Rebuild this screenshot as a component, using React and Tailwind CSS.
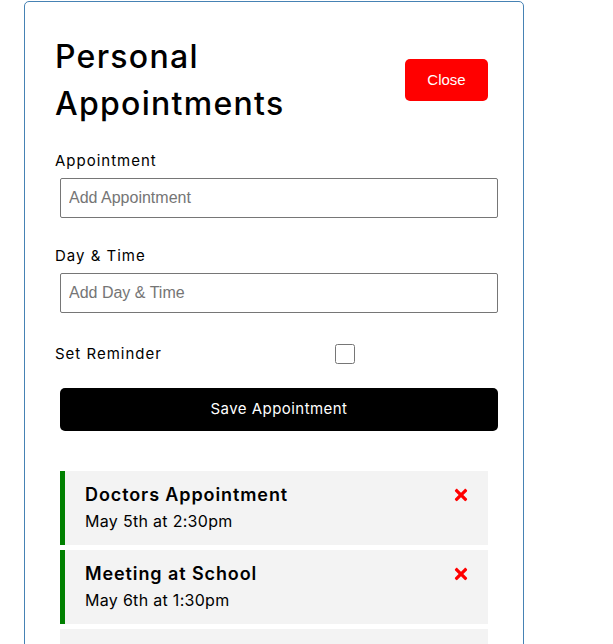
import React from "react";
import { FaTimes } from "react-icons/fa";

function Item({ title, date, reminder }) {
  return (
    <div
      className={
        reminder
          ? "ml-[5px] mr-[10px] mb-[5px] flex items-start justify-between bg-[#f3f3f3] border-l-[5px] border-[#008000] pl-[20px] pr-[18px] pt-[10px] pb-[11px]"
          : "ml-[5px] mr-[10px] mb-[5px] flex items-start justify-between bg-[#f3f3f3] border-l-[5px] border-transparent pl-[20px] pr-[18px] pt-[10px] pb-[11px]"
      }
    >
      <div>
        <div className="text-[18px] leading-[28px] font-semibold tracking-[0.9px] text-black">{title}</div>
        <div className="text-[16px] leading-[25px] tracking-[0.3px] text-black">{date}</div>
      </div>
      <div className="pt-[5px]">
        <FaTimes size={18} color="#ff0000" />
      </div>
    </div>
  );
}

export default function App() {
  return (
    <div className="min-h-[644px] bg-white pl-[24px] pt-[1px] font-[Inter,sans-serif]">
      <div className="w-[500px] min-h-[660px] border border-[#4682b4] rounded-[5px] pl-[30px] pr-[25px] pt-[31px]">
        <div className="flex items-center justify-between">
          <h1 className="text-[32px] leading-[47px] font-medium tracking-[0.04em] text-black w-[300px]">
            Personal Appointments
          </h1>
          <button className="mr-[10px] w-[83px] h-[42px] rounded-[5px] bg-[#ff0000] text-white text-[15px] font-['Liberation_Sans',Arial,sans-serif]">
            Close
          </button>
        </div>

        <label className="block mt-[23px] text-[15px] leading-[22px] tracking-[1px] text-black">Appointment</label>
        <input
          placeholder="Add Appointment"
          className="block mt-[6px] ml-[5px] w-[438px] h-[40px] border border-[#767676] rounded-[2px] px-[8px] text-[16px] font-['Liberation_Sans',Arial,sans-serif] placeholder:text-[#757575]"
        />

        <label className="block mt-[27px] text-[15px] leading-[22px] tracking-[1px] text-black">Day &amp; Time</label>
        <input
          placeholder="Add Day & Time"
          className="block mt-[6px] ml-[5px] w-[438px] h-[40px] border border-[#767676] rounded-[2px] px-[8px] text-[16px] font-['Liberation_Sans',Arial,sans-serif] placeholder:text-[#757575]"
        />

        <div className="mt-[30px] flex items-center">
          <span className="w-[280px] text-[15px] leading-[22px] tracking-[1px] text-black">Set Reminder</span>
          <input type="checkbox" className="w-[20px] h-[20px]" />
        </div>

        <button className="block mt-[23px] ml-[5px] w-[438px] h-[43px] rounded-[5px] bg-black text-white text-[15px] tracking-[0.45px]">
          Save Appointment
        </button>

        <div className="mt-[40px]">
          <Item title="Doctors Appointment" date="May 5th at 2:30pm" reminder />
          <Item title="Meeting at School" date="May 6th at 1:30pm" reminder />
          <Item title="Food Shopping" date="May 7th at 10:00am" />
        </div>
      </div>
    </div>
  );
}
